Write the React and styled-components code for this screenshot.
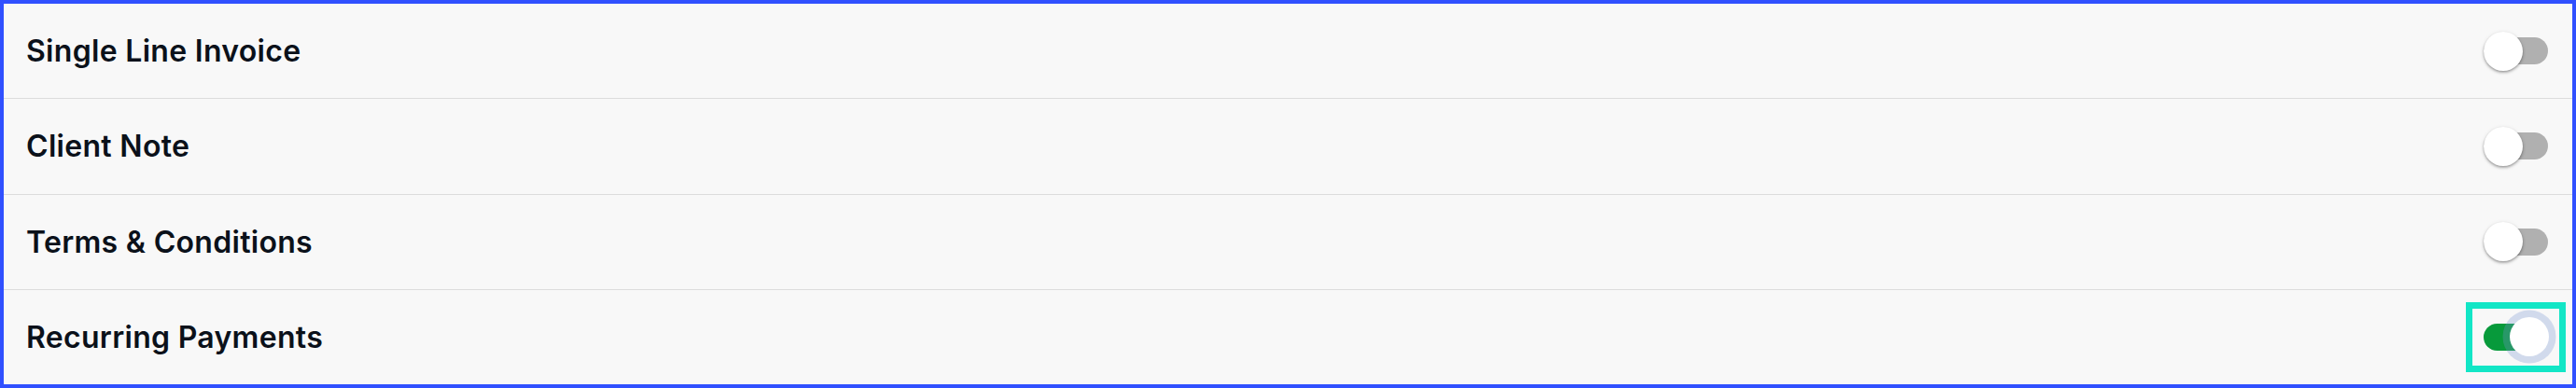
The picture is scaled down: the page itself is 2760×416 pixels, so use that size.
import React, { useState } from 'react';
import styled, { createGlobalStyle } from 'styled-components';

const GlobalStyle = createGlobalStyle`
  html, body {
    margin: 0;
    padding: 0;
    background: #f8f8f8;
  }
  * {
    box-sizing: border-box;
  }
`;

const Panel = styled.div`
  width: 2760px;
  height: 416px;
  display: flex;
  flex-direction: column;
  background: #f8f8f8;
  border: 4px solid #3050ff;
  font-family: Inter, 'Noto Sans', sans-serif;
`;

const Row = styled.div`
  flex: 1;
  display: flex;
  align-items: center;
  justify-content: space-between;
  padding: 0 14px 0 24px;
  border-bottom: 1px solid #dcdcdc;

  &:last-child {
    border-bottom: none;
  }
`;

const Label = styled.span`
  font-size: 32px;
  font-weight: 600;
  color: #0b111a;
  letter-spacing: 0.3px;
`;

const SwitchRoot = styled.button`
  position: relative;
  width: 93px;
  height: 61px;
  padding: 0;
  border: none;
  background: transparent;
  display: flex;
  align-items: center;
  justify-content: center;
  cursor: pointer;
  outline: ${p => (p.$focused ? '7px solid #12e6c6' : 'none')};
`;

const Track = styled.span`
  width: 69px;
  height: 29px;
  border-radius: 15px;
  background: ${p => (p.$on ? '#079a3b' : '#b0b0b0')};
`;

const Thumb = styled.span`
  position: absolute;
  top: 9.5px;
  left: ${p => (p.$on ? '40px' : '11.5px')};
  width: 42px;
  height: 42px;
  border-radius: 50%;
  background: #ffffff;
  box-shadow: ${p =>
    p.$on
      ? '0 0 0 7.5px rgba(120, 148, 207, 0.3)'
      : '0 2px 3px rgba(0, 0, 0, 0.22), 0 1px 2px rgba(0, 0, 0, 0.14), 0 1px 5px rgba(0, 0, 0, 0.1)'};
`;

const Toggle = ({ on, focused, onClick }) => (
  <SwitchRoot $focused={focused} onClick={onClick} role="switch" aria-checked={on}>
    <Track $on={on} />
    <Thumb $on={on} />
  </SwitchRoot>
);

const initial = [
  { key: 'single', label: 'Single Line Invoice', on: false },
  { key: 'note', label: 'Client Note', on: false },
  { key: 'terms', label: 'Terms & Conditions', on: false },
  { key: 'recurring', label: 'Recurring Payments', on: true },
];

export default function App() {
  const [settings, setSettings] = useState(initial);
  const [focused, setFocused] = useState('recurring');

  const flip = key => {
    setFocused(key);
    setSettings(list => list.map(s => (s.key === key ? { ...s, on: !s.on } : s)));
  };

  return (
    <>
      <GlobalStyle />
      <Panel>
        {settings.map(s => (
          <Row key={s.key}>
            <Label>{s.label}</Label>
            <Toggle on={s.on} focused={focused === s.key} onClick={() => flip(s.key)} />
          </Row>
        ))}
      </Panel>
    </>
  );
}
